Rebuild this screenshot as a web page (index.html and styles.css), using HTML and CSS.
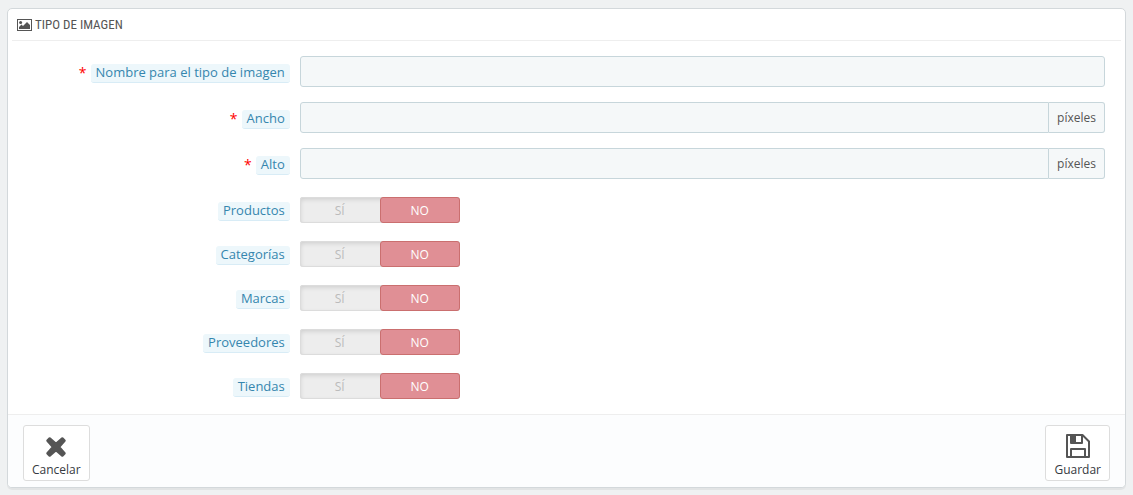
FILE: index.html
```html
<!DOCTYPE html>
<html lang="es">
<head>
<meta charset="utf-8">
<meta name="viewport" content="width=device-width, initial-scale=1">
<title>Tipo de imagen</title>
<link rel="stylesheet" href="styles.css">
</head>
<body>
<form class="panel">
  <h1 class="panel-heading">
    <svg class="heading-icon" viewBox="0 0 15 12" aria-hidden="true">
      <rect x="0.5" y="0.5" width="14" height="11" fill="none" stroke="#555"/>
      <circle cx="3.6" cy="3.6" r="1.5" fill="#555"/>
      <path d="M2 10V8l2.500-2.500L6 7l4-4 3 3v4z" fill="#555"/>
    </svg>
    <span>TIPO DE IMAGEN</span>
  </h1>

  <div class="fields">
    <div class="row">
      <div class="label-col"><span class="required">*</span><label class="tag" for="name">Nombre para el tipo de imagen</label></div>
      <div class="control-col"><input class="text-input" type="text" id="name" required></div>
    </div>
    <div class="row">
      <div class="label-col"><span class="required">*</span><label class="tag" for="width">Ancho</label></div>
      <div class="control-col"><input class="text-input joined" type="text" id="width" required><span class="addon">píxeles</span></div>
    </div>
    <div class="row">
      <div class="label-col"><span class="required">*</span><label class="tag" for="height">Alto</label></div>
      <div class="control-col"><input class="text-input joined" type="text" id="height" required><span class="addon">píxeles</span></div>
    </div>
  </div>

  <div class="switches">
    <div class="row">
      <div class="label-col"><span class="tag" id="l-products">Productos</span></div>
      <div class="control-col"><div class="switch" role="radiogroup" aria-labelledby="l-products">
        <label class="option"><input type="radio" name="products" value="1"><span class="face">SÍ</span></label>
        <label class="option"><input type="radio" name="products" value="0" checked><span class="face">NO</span></label>
      </div></div>
    </div>
    <div class="row">
      <div class="label-col"><span class="tag" id="l-categories">Categorías</span></div>
      <div class="control-col"><div class="switch" role="radiogroup" aria-labelledby="l-categories">
        <label class="option"><input type="radio" name="categories" value="1"><span class="face">SÍ</span></label>
        <label class="option"><input type="radio" name="categories" value="0" checked><span class="face">NO</span></label>
      </div></div>
    </div>
    <div class="row">
      <div class="label-col"><span class="tag" id="l-brands">Marcas</span></div>
      <div class="control-col"><div class="switch" role="radiogroup" aria-labelledby="l-brands">
        <label class="option"><input type="radio" name="brands" value="1"><span class="face">SÍ</span></label>
        <label class="option"><input type="radio" name="brands" value="0" checked><span class="face">NO</span></label>
      </div></div>
    </div>
    <div class="row">
      <div class="label-col"><span class="tag" id="l-suppliers">Proveedores</span></div>
      <div class="control-col"><div class="switch" role="radiogroup" aria-labelledby="l-suppliers">
        <label class="option"><input type="radio" name="suppliers" value="1"><span class="face">SÍ</span></label>
        <label class="option"><input type="radio" name="suppliers" value="0" checked><span class="face">NO</span></label>
      </div></div>
    </div>
    <div class="row">
      <div class="label-col"><span class="tag" id="l-stores">Tiendas</span></div>
      <div class="control-col"><div class="switch" role="radiogroup" aria-labelledby="l-stores">
        <label class="option"><input type="radio" name="stores" value="1"><span class="face">SÍ</span></label>
        <label class="option"><input type="radio" name="stores" value="0" checked><span class="face">NO</span></label>
      </div></div>
    </div>
  </div>

  <div class="panel-footer">
    <button class="action" type="button">
      <svg class="action-icon" viewBox="0 0 30 30" aria-hidden="true">
        <path d="M8.700 7.500L15 13l6.300-5.500L23.500 9.700 18 16l5.500 6.300-2.200 2.200L15 19l-6.300 5.500-2.200-2.200L12 16 6.500 9.700z" fill="#555" stroke="#555" stroke-width="2.500" stroke-linejoin="round"/>
      </svg>
      <span>Cancelar</span>
    </button>
    <button class="action" type="submit">
      <svg class="action-icon" viewBox="0 0 30 30" aria-hidden="true">
        <path d="M4 4h15.500l6.500 6.500V26H4z" fill="none" stroke="#555" stroke-width="2" stroke-linejoin="round"/>
        <path d="M8 4v8h11V4M8 26v-8h14v8" fill="none" stroke="#555" stroke-width="2" stroke-linejoin="round"/>
        <path d="M8 4h5v8H8z" fill="#555"/>
      </svg>
      <span>Guardar</span>
    </button>
  </div>
</form>
</body>
</html>
```
FILE: styles.css
```css
* { box-sizing: border-box; }

body {
  margin: 0;
  padding: 8px 7px;
  background: #eff1f2;
  color: #555;
  font: 12px/17px "Open Sans", "Noto Sans", sans-serif;
}

.panel {
  background: #fff;
  border: 1px solid #d3d8db;
  border-radius: 5px;
  box-shadow: 0 2px 0 rgba(0, 0, 0, 0.05);
  overflow: hidden;
}

.panel-heading {
  display: flex;
  align-items: center;
  gap: 3px;
  height: 32px;
  margin: 0 4px;
  padding: 0 5px;
  border-bottom: 1px solid #eee;
  font: 13px/30px "Ubuntu Condensed", "Roboto Condensed", Lato, sans-serif;
}

.heading-icon { width: 15px; height: 12px; }

.fields,
.switches {
  display: flex;
  flex-direction: column;
  padding: 15px 15px 0;
}

.fields { gap: 15px; }

.switches {
  gap: 18px;
  padding-top: 18px;
  padding-bottom: 15px;
}

.row {
  display: grid;
  grid-template-columns: 1fr 3fr;
  align-items: center;
}

.label-col {
  display: flex;
  justify-content: flex-end;
  align-items: flex-start;
  gap: 4px;
  padding: 2px 5px 0;
}

.fields .label-col { padding-top: 3px; }

.control-col {
  display: flex;
  padding: 0 5px;
}

.required {
  color: #f00;
  font-size: 14px;
}

.tag {
  padding: 0 5px 1px;
  border-bottom: 1px solid #d8ecf6;
  border-radius: 3px;
  background: #edf7fb;
  color: #3586ae;
  font-size: 13px;
  white-space: nowrap;
}

.text-input {
  flex: 1;
  min-width: 0;
  height: 31px;
  padding: 6px 8px;
  border: 1px solid #c7d6db;
  border-radius: 3px;
  background: #f5f8f9;
  color: #555;
  font: inherit;
}

.joined { border-radius: 3px 0 0 3px; }

.addon {
  padding: 6px 8px;
  border: 1px solid #c7d6db;
  border-left: 0;
  border-radius: 0 3px 3px 0;
  background: #f5f8f9;
}

.switch {
  display: flex;
  width: 160px;
  height: 26px;
  border-radius: 3px;
  background: #ededed;
  box-shadow: inset 0 0 0 1px #dcdcdc, inset 0 2px 5px rgba(0, 0, 0, 0.15);
}

.option {
  position: relative;
  flex: 1;
}

.option input {
  position: absolute;
  inset: 0;
  width: 100%;
  height: 100%;
  margin: 0;
  opacity: 0;
}

.face {
  display: block;
  height: 26px;
  border: 1px solid transparent;
  border-radius: 3px;
  color: #bbb;
  line-height: 25px;
  text-align: center;
}

.option input:checked + .face {
  border-color: #ca6f6f;
  background: #e08f95;
  color: #fff;
}

.panel-footer {
  display: flex;
  justify-content: space-between;
  padding: 10px 15px 6px;
  border-top: 1px solid #eee;
  background: #fcfdfe;
}

.action {
  display: flex;
  flex-direction: column;
  align-items: center;
  padding: 5px 8px 2px;
  border: 1px solid #ddd;
  border-radius: 3px;
  background: #fff;
  color: #363a41;
  font: inherit;
}

.action-icon { width: 30px; height: 30px; }
```
